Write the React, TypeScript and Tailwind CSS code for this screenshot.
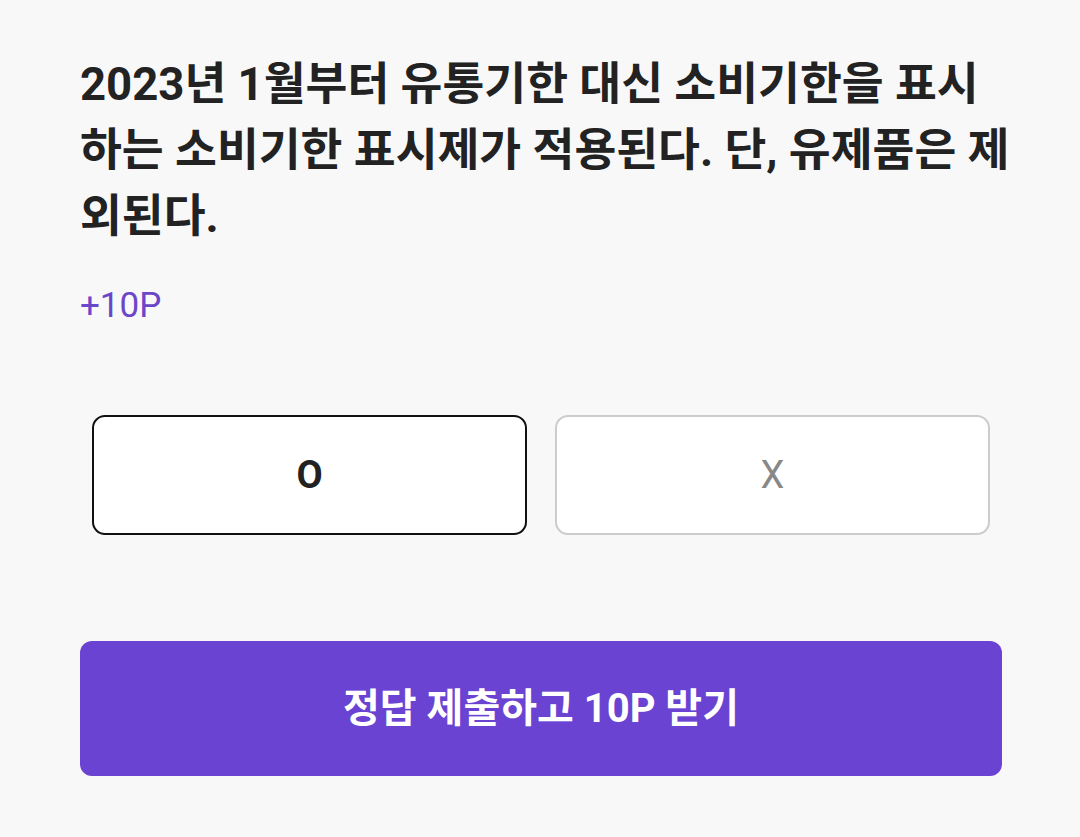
import React, { useState } from 'react';

const FONT = "font-['Roboto','Noto_Sans_CJK_KR',sans-serif]";

export default function App() {
  const [answer, setAnswer] = useState<'O' | 'X'>('O');

  return (
    <div className={`min-h-screen bg-[#f8f8f8] pl-[80px] pr-[78px] pt-[52px] ${FONT}`}>
      {/* 문제 */}
      <p className="mr-[-10px] text-[45.5px] leading-[66px] font-bold text-[#222222]">
        2023년 1월부터 유통기한 대신 소비기한을 표시하는 소비기한 표시제가 적용된다. 단, 유제품은 제외된다.
      </p>
      <p className="mt-[36px] text-[35px] leading-[40px] text-[#6c46c8]">+10P</p>

      {/* O / X 선택 */}
      <div className="mt-[89px] px-[12px] grid grid-cols-2 gap-[28px]">
        <button
          onClick={() => setAnswer('O')}
          className={`h-[120px] rounded-[13px] bg-white border-2 text-[38px] ${
            answer === 'O' ? 'border-[#111111] font-bold text-[#222222]' : 'border-[#cccccc] text-[#888888]'
          }`}
        >
          O
        </button>
        <button
          onClick={() => setAnswer('X')}
          className={`h-[120px] rounded-[13px] bg-white border-2 text-[38px] ${
            answer === 'X' ? 'border-[#111111] font-bold text-[#222222]' : 'border-[#cccccc] text-[#888888]'
          }`}
        >
          X
        </button>
      </div>

      {/* 제출 */}
      <button className="mt-[106px] w-full h-[135px] rounded-[12px] bg-[#6a43d2] text-white text-[40px] font-bold">
        정답 제출하고 10P 받기
      </button>
    </div>
  );
}
